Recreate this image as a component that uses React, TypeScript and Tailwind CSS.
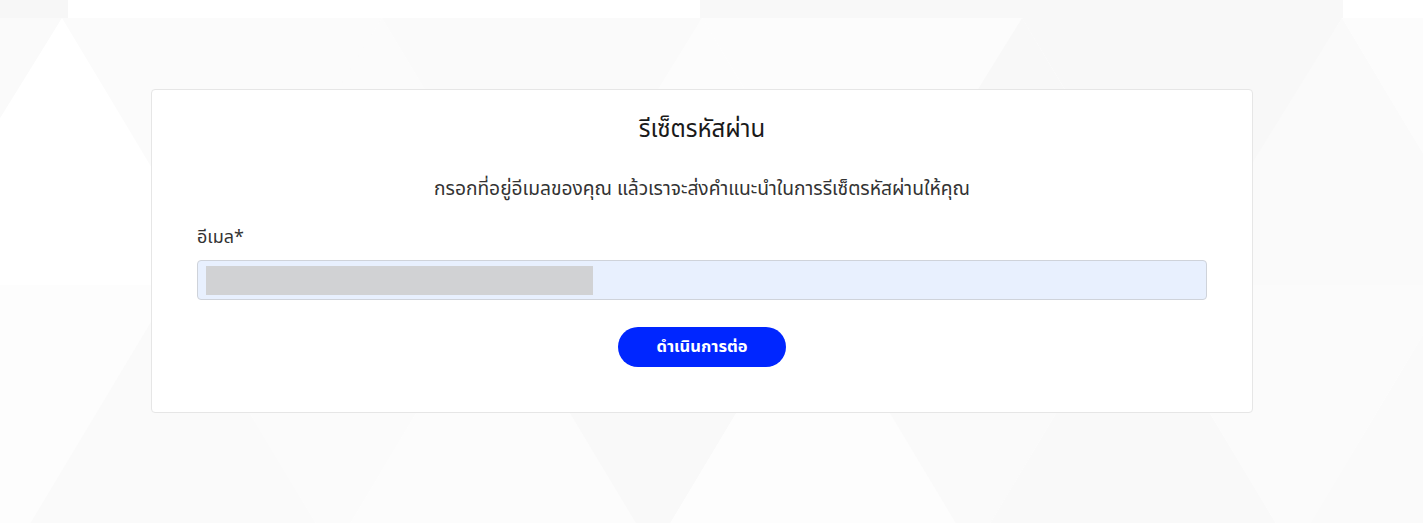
import React from "react";

const font = { fontFamily: '"Noto Sans Thai", "Noto Sans", "DejaVu Sans", sans-serif' };

// soft triangle backdrop behind the form
const Backdrop = () => {
    const top = 18;
    const mid = 285;
    const bottom = 552;
    const up1 = ["#f8f8f8", "#fafafa", "#fcfcfc", "#fbfbfb", "#fbfbfb", "#fafafa", "#fcfcfc", "#fcfcfc", "#f8f8f8"];
    const row2 = ["#fbfbfb", "#fafafa", "#fdfdfd", "#fafafa", "#fbfbfb", "#fcfcfc", "#f9f9f9", "#fdfdfd", "#fafafa", "#f9f9f9"];
    const tris: { points: string; fill: string }[] = [];

    // band one: up triangles with apex at 62 + 320k, down triangles between
    for (let k = -1; k < 5; k++) {
        const ax = 62 + 320 * k;
        tris.push({ points: `${ax},${top} ${ax - 165},${mid} ${ax + 160},${mid}`, fill: k === 0 ? "#ffffff" : up1[(k * 2 + 2) % up1.length] });
        tris.push({ points: `${ax},${top} ${ax + 320},${top} ${ax + 160},${mid}`, fill: up1[(k * 2 + 3) % up1.length] });
    }

    // band two: down triangles with apex at 13 + 320k
    for (let k = -1; k < 5; k++) {
        const ax = 13 + 320 * k;
        tris.push({ points: `${ax - 160},${mid} ${ax + 160},${mid} ${ax},${bottom}`, fill: row2[(k * 2 + 2) % row2.length] });
        tris.push({ points: `${ax + 160},${mid} ${ax},${bottom} ${ax + 320},${bottom}`, fill: row2[(k * 2 + 3) % row2.length] });
    }

    return (
        <svg className="absolute inset-0 h-full w-full" viewBox="0 0 1423 523" preserveAspectRatio="none">
            <rect x="0" y="0" width="1423" height="523" fill="#ffffff" />
            <rect x="0" y="0" width="68" height={top} fill="#f7f7f7" />
            <rect x="700" y="0" width="643" height={top} fill="#f8f8f8" />
            {tris.map((t, i) => (
                <polygon key={i} points={t.points} fill={t.fill} />
            ))}
        </svg>
    );
};

const App = () => {
    return (
        <div className="relative h-[523px] w-full overflow-hidden bg-white" style={font}>
            <Backdrop />

            <div className="relative pt-[89px] pl-[151px]">
                <div className="w-[1102px] rounded border border-[#e6e6e6] bg-white px-[45px] pt-[24px] pb-[45px]">
                    <h1 className="text-center text-[24px] leading-[32px] font-normal text-[#1a1a1a]">
                        รีเซ็ตรหัสผ่าน
                    </h1>

                    <p className="mt-[32px] text-center text-[19.2px] leading-[24px] text-[#333333]">
                        กรอกที่อยู่อีเมลของคุณ แล้วเราจะส่งคำแนะนำในการรีเซ็ตรหัสผ่านให้คุณ
                    </p>

                    <label className="mt-[24px] block text-[18px] leading-[24px] text-[#333333]">
                        อีเมล*
                    </label>

                    <div className="mt-[10px] flex h-[40px] items-center rounded border border-[#cfd3da] bg-[#e8f0fe] px-[8px]">
                        <div className="h-[29px] w-[387px] bg-[#d1d2d4]" />
                    </div>

                    <div className="mt-[27px] flex justify-center">
                        <button className="h-[40px] w-[168px] rounded-full bg-[#0026ff] text-[16.5px] font-bold text-white">
                            ดำเนินการต่อ
                        </button>
                    </div>
                </div>
            </div>
        </div>
    );
};

export default App;
